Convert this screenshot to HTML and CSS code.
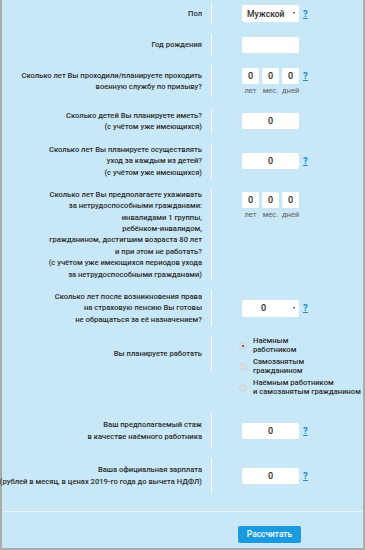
FILE: index.html
```html
<!DOCTYPE html>
<html lang="ru">
<head>
<meta charset="utf-8">
<link rel="stylesheet" href="styles.css">
</head>
<body>
<div class="frame">
  <div class="form">
    <div class="row r1">
      <div class="label">Пол</div>
      <div class="ctrl">
        <div class="select"><span class="sel-text">Мужской</span><span class="arrow"></span></div>
        <a class="help">?</a>
      </div>
    </div>
    <div class="row r1">
      <div class="label">Год рождения</div>
      <div class="ctrl"><div class="input"></div></div>
    </div>
    <div class="row r3">
      <div class="label">Сколько лет Вы проходили/планируете проходить<br>военную службу по призыву?</div>
      <div class="ctrl ctrl-top">
        <div class="triple">
          <div class="boxes">
            <div class="box">0</div><div class="box">0</div><div class="box">0</div>
          </div>
          <div class="units"><span>лет</span><span>мес.</span><span>дней</span></div>
        </div>
        <a class="help help-top">?</a>
      </div>
    </div>
    <div class="row">
      <div class="label">Сколько детей Вы планируете иметь?<br>(с учётом уже имеющихся)</div>
      <div class="ctrl"><div class="input">0</div></div>
    </div>
    <div class="row r-pad">
      <div class="label">Сколько лет Вы планируете осуществлять<br>уход за каждым из детей?<br>(с учётом уже имеющихся)</div>
      <div class="ctrl"><div class="input">0</div><a class="help">?</a></div>
    </div>
    <div class="row">
      <div class="label">Сколько лет Вы предполагаете ухаживать<br>за нетрудоспособными гражданами:<br>инвалидами 1 группы,<br>ребёнком-инвалидом,<br>гражданином, достигшим возраста 80 лет<br>и при этом не работать?<br>(с учётом уже имеющихся периодов ухода<br>за нетрудоспособными гражданами)</div>
      <div class="ctrl ctrl-start">
        <div class="triple">
          <div class="boxes">
            <div class="box">0</div><div class="box">0</div><div class="box">0</div>
          </div>
          <div class="units"><span>лет</span><span>мес.</span><span>дней</span></div>
        </div>
      </div>
    </div>
    <div class="row r-pad">
      <div class="label">Сколько лет после возникновения права<br>на страховую пенсию Вы готовы<br>не обращаться за её назначением?</div>
      <div class="ctrl">
        <div class="select select-num"><span class="sel-text">0</span><span class="arrow"></span></div>
        <a class="help">?</a>
      </div>
    </div>
    <div class="row row-radio">
      <div class="label label-fixed">Вы планируете работать</div>
      <div class="ctrl ctrl-radios">
        <div class="radio checked"><span class="dot"></span><span class="rtext">Наёмным<br>работником</span></div>
        <div class="radio"><span class="dot"></span><span class="rtext">Самозанятым<br>гражданином</span></div>
        <div class="radio"><span class="dot"></span><span class="rtext">Наёмным работником<br>и самозанятым гражданином</span></div>
      </div>
    </div>
    <div class="row r-tall">
      <div class="label">Ваш предполагаемый стаж<br>в качестве наёмного работника</div>
      <div class="ctrl"><div class="input">0</div><a class="help">?</a></div>
    </div>
    <div class="row r-tall">
      <div class="label">Ваша официальная зарплата<br>(рублей в месяц, в ценах 2019-го года до вычета НДФЛ)</div>
      <div class="ctrl"><div class="input">0</div><a class="help">?</a></div>
    </div>
  </div>
  <div class="sep"></div>
  <div class="actions"><button class="btn">Рассчитать</button></div>
</div>
</body>
</html>
```
FILE: styles.css
```css
html, body {
  margin: 0;
  padding: 0;
  background: #c8e8f8;
}
.frame {
  width: 365px;
  height: 550px;
  box-sizing: border-box;
  border: 2px solid #ababab;
  border-top: none;
  background: #c8e8f8;
  font-family: Roboto, "Liberation Sans", Arial, sans-serif;
  color: #2b2b2b;
  padding-top: 3px;
}
.form {
  display: flex;
  flex-direction: column;
  gap: 10px;
}
.row {
  display: flex;
  align-items: stretch;
}
.r1 { min-height: 21px; }
.r3 { min-height: 32px; margin-bottom: 3px; }
.r-pad { min-height: 36px; }
.r-tall { min-height: 35px; }
.label {
  width: 210px;
  box-sizing: border-box;
  padding-right: 9px;
  border-right: 1px solid rgba(255,255,255,0.95);
  text-align: right;
  font-size: 7.6px;
  font-weight: 500;
  line-height: 11.4px;
  white-space: nowrap;
  color: #2b2b2b;
  display: flex;
  flex-direction: column;
  justify-content: center;
  align-items: flex-end;
}
.ctrl {
  padding-left: 30px;
  display: flex;
  align-items: center;
}
.ctrl-start {
  align-items: flex-start;
  padding-top: 3px;
}
.ctrl-top {
  align-items: flex-start;
  padding-top: 3px;
}
.input, .select {
  width: 57px;
  height: 16px;
  background: #fff;
  border-radius: 2px;
  box-shadow: 0 0 0 0.5px #d8e6ee;
  font-size: 9px;
  font-weight: 500;
  color: #2b2b2b;
  display: flex;
  align-items: center;
  justify-content: center;
}
.select {
  height: 17px;
  justify-content: flex-start;
  position: relative;
  font-size: 8.6px;
}
.sel-text {
  padding-left: 5px;
}
.select-num .sel-text {
  padding-left: 0;
  width: 43px;
  text-align: center;
  font-size: 9px;
}
.arrow {
  position: absolute;
  right: 4px;
  top: 7px;
  width: 0;
  height: 0;
  border-left: 1.5px solid transparent;
  border-right: 1.5px solid transparent;
  border-top: 2.5px solid #333;
}
.help {
  margin-left: 4px;
  font-size: 9.5px;
  font-weight: 700;
  color: #1a8ccc;
  text-decoration: underline;
  line-height: 10px;
}
.help-top {
  margin-top: 3px;
}
.triple {
  display: flex;
  flex-direction: column;
}
.boxes {
  display: flex;
  gap: 3px;
}
.box {
  width: 17px;
  height: 16px;
  background: #fff;
  border-radius: 2px;
  font-size: 9px;
  font-weight: 500;
  color: #2b2b2b;
  display: flex;
  align-items: center;
  justify-content: center;
}
.units {
  display: flex;
  gap: 3px;
  margin-top: 2px;
  font-size: 7.6px;
  color: #5e5e5e;
  line-height: 10px;
}
.units span {
  width: 17px;
  text-align: center;
}
.row-radio {
  align-items: flex-start;
  margin-bottom: 7px;
}
.label-fixed {
  height: 35px;
}
.ctrl-radios {
  flex-direction: column;
  align-items: flex-start;
  gap: 4px;
  padding-left: 28px;
  padding-top: 1px;
}
.radio {
  display: flex;
  align-items: center;
  height: 17px;
}
.dot {
  flex: none;
  width: 6px;
  height: 6px;
  border-radius: 50%;
  background: #dadfe2;
  box-shadow: 0 0 0 0.5px #c2c9ce;
  margin-right: 7px;
  position: relative;
}
.checked .dot::after {
  content: "";
  position: absolute;
  left: 2px;
  top: 2px;
  width: 2px;
  height: 2px;
  border-radius: 50%;
  background: #444;
}
.rtext {
  font-size: 7.6px;
  font-weight: 500;
  line-height: 8.6px;
  white-space: nowrap;
  color: #2b2b2b;
}
.sep {
  height: 1px;
  background: rgba(255,255,255,0.5);
  margin-top: 18px;
}
.actions {
  padding-top: 10px;
  padding-left: 236px;
}
.btn {
  width: 63px;
  height: 17px;
  border: none;
  border-radius: 2px;
  background: #1a9be0;
  color: #fff;
  font-family: Roboto, "Liberation Sans", Arial, sans-serif;
  font-size: 8.4px;
  font-weight: 500;
  padding: 0;
}
```
